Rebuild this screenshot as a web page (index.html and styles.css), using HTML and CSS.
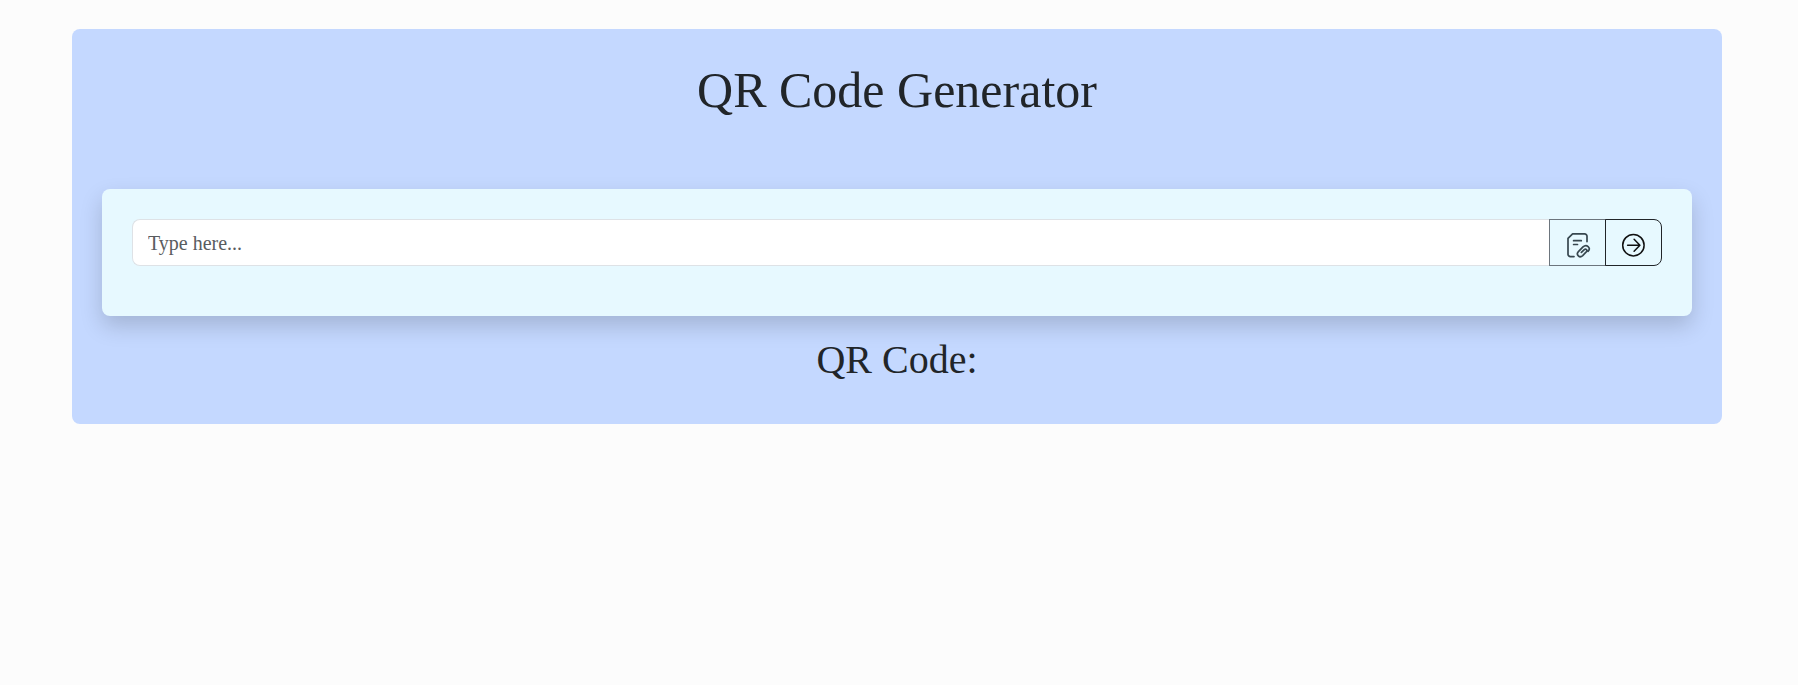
FILE: index.html
```html
<!DOCTYPE html>
<html lang="en">
<head>
<meta charset="utf-8">
<title>QR Code Generator</title>
<link rel="stylesheet" href="styles.css">
</head>
<body>
<main class="container">
  <h1 class="title">QR Code Generator</h1>
  <section class="card">
    <div class="input-group">
      <input class="field" type="text" placeholder="Type here...">
      <button class="btn btn-file" type="button" aria-label="Attach">
        <svg width="27" height="27" viewBox="0 0 27 27" fill="none" stroke="currentColor" stroke-width="1.7" stroke-linecap="round" stroke-linejoin="round">
          <path d="M23 10.6V5.3a2.4 2.4 0 0 0-2.4-2.4H8.6L4 7.4v15.8a2.4 2.4 0 0 0 2.4 2.4H10"/>
          <path d="M9.6 9.7H17.3M9.6 13.5H13.5"/>
          <path d="M17.4 21.4l2.9-2.8c1.5-1.3 3.5.5 2.2 2l-3.8 4c-3.1 2.9-7.1-.9-4.3-4l4.6-4.7c3.7-3.3 8.2.9 5.2 4.4"/>
        </svg>
      </button>
      <button class="btn btn-go" type="button" aria-label="Generate">
        <svg width="27" height="27" viewBox="0 0 27 27" fill="none" stroke="currentColor" stroke-width="1.5" stroke-linecap="round" stroke-linejoin="round">
          <circle cx="13.4" cy="14.2" r="10.7"/>
          <path d="M7.6 14.2H19.4M14.1 8.2L19.9 14.2L14.1 20.2"/>
        </svg>
      </button>
    </div>
  </section>
  <h2 class="subtitle">QR Code:</h2>
</main>
</body>
</html>
```

FILE: styles.css
```css
* { box-sizing: border-box; }
body {
  margin: 0;
  background: #fcfcfc;
  color: #212529;
  font-family: "Liberation Serif", "Times New Roman", serif;
}
.container {
  width: 1650px;
  height: 395px;
  margin: 29px 0 0 72px;
  padding: 31px 30px 30px;
  border-radius: 8px;
  background: #c4d8ff;
}
.title {
  margin: 0 0 69px;
  font-size: 50px;
  font-weight: 400;
  line-height: 60px;
  text-align: center;
}
.card {
  height: 127px;
  padding: 30px;
  border-radius: 8px;
  background: #e7f9ff;
  box-shadow: 0 10px 22px rgba(0, 0, 0, .17);
}
.input-group { display: flex; height: 47px; }
.field {
  flex: 1;
  min-width: 0;
  padding: 2px 15px 0;
  border: 1px solid #dee2e6;
  border-right: 0;
  border-radius: 8px 0 0 8px;
  background: #fff;
  font: 20px "Liberation Serif", "Times New Roman", serif;
}
.field::placeholder { color: #595c5f; opacity: 1; }
.btn {
  display: flex;
  align-items: center;
  justify-content: center;
  width: 57px;
  padding: 4px 0 0;
  border: 1px solid #6c757d;
  background: transparent;
  color: #37474f;
}
.btn-go {
  margin-left: -1px;
  border-color: #212529;
  border-radius: 0 8px 8px 0;
  color: #111;
}
.subtitle {
  margin: 20px 0 0;
  font-size: 40px;
  font-weight: 400;
  line-height: 48px;
  text-align: center;
}
```
